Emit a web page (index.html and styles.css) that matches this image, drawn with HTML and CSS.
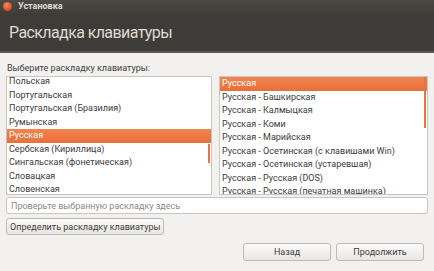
FILE: index.html
```html
<!DOCTYPE html>
<html lang="ru">
<head>
  <meta charset="UTF-8">
  <title>Установка</title>
  <link rel="stylesheet" href="styles.css">
</head>
<body>
  <div class="window">
    <div class="titlebar">
      <span class="close"></span>
      <span class="wintitle">Установка</span>
    </div>
    <div class="header">
      <h1>Раскладка клавиатуры</h1>
    </div>

    <div class="content">
      <div class="label">Выберите раскладку клавиатуры:</div>

      <div class="lists">
        <div class="list list-left">
          <div class="rows rows-left">
            <div class="row">Польская</div>
            <div class="row">Португальская</div>
            <div class="row">Португальская (Бразилия)</div>
            <div class="row">Румынская</div>
            <div class="row selected">Русская</div>
            <div class="row">Сербская (Кириллица)</div>
            <div class="row">Сингальская (фонетическая)</div>
            <div class="row">Словацкая</div>
            <div class="row">Словенская</div>
          </div>
          <span class="scroll scroll-left"></span>
        </div>

        <div class="list">
          <div class="rows">
            <div class="row selected">Русская</div>
            <div class="row">Русская - Башкирская</div>
            <div class="row">Русская - Калмыцкая</div>
            <div class="row">Русская - Коми</div>
            <div class="row">Русская - Марийская</div>
            <div class="row">Русская - Осетинская (с клавишами Win)</div>
            <div class="row">Русская - Осетинская (устаревшая)</div>
            <div class="row">Русская - Русская (DOS)</div>
            <div class="row">Русская - Русская (печатная машинка)</div>
          </div>
          <span class="scroll scroll-right"></span>
        </div>
      </div>

      <input class="entry" type="text" placeholder="Проверьте выбранную раскладку здесь">

      <button class="btn detect">Определить раскладку клавиатуры</button>

      <div class="actions">
        <button class="btn action">Назад</button>
        <button class="btn action">Продолжить</button>
      </div>
    </div>
  </div>
</body>
</html>
```

FILE: styles.css
```css
body {
  margin: 0;
  font-family: Roboto, "Open Sans", sans-serif;
  font-size: 9px;
  background: #f2f1f0;
  color: #3c3c3c;
}

.window {
  width: 434px;
  height: 271px;
  overflow: hidden;
}

.titlebar {
  height: 14px;
  display: flex;
  align-items: center;
  gap: 6px;
  padding-left: 3px;
  background: linear-gradient(#4b4a45, #3e3d39);
}

.close {
  width: 9px;
  height: 9px;
  border-radius: 50%;
  background: radial-gradient(circle at 40% 35%, #f58a5e, #dd4814 70%);
  margin-top: -2px;
}

.wintitle {
  font-size: 9px;
  font-weight: bold;
  color: #dfdbd2;
  margin-top: -3px;
}

.header {
  height: 39px;
  background: #3d3c38;
  border-bottom: 2px solid #5a5954;
  box-sizing: border-box;
  display: flex;
  align-items: center;
  padding-left: 9px;
}

h1 {
  margin: 0;
  font-size: 16px;
  font-weight: normal;
  letter-spacing: -0.6px;
  color: #dfdbd2;
  margin-top: -1px;
}

.content {
  padding: 7px 6px 0 6px;
}

.label {
  height: 15px;
  line-height: 15px;
  padding-left: 1px;
  margin-top: 1px;
}

.lists {
  display: flex;
  gap: 7px;
}

.list {
  position: relative;
  flex: 1;
  height: 117px;
  background: #fff;
  border: 1px solid #c9c6c1;
  overflow: hidden;
}

.list-left {
  flex: none;
  width: 204px;
}

.rows-left {
  margin-top: -2px;
}

.row {
  height: 13.5px;
  line-height: 13.5px;
  padding-left: 2px;
  white-space: nowrap;
}

.row.selected {
  background: linear-gradient(#f3844f, #e86f3a);
  color: #fff;
}

.scroll {
  position: absolute;
  right: 1px;
  width: 2px;
  background: #e9743f;
}

.scroll-left {
  top: 67px;
  height: 19px;
}

.scroll-right {
  top: 0;
  height: 51px;
}

.entry {
  display: block;
  box-sizing: border-box;
  width: 100%;
  height: 17px;
  margin-top: 2px;
  border: 1px solid #c9c6c1;
  border-radius: 3px;
  background: #fff;
  font-family: inherit;
  font-size: 9px;
  padding: 0 4px;
}

.entry::placeholder {
  color: #8a8a8a;
}

.btn {
  font-family: inherit;
  font-size: 9px;
  color: #3c3c3c;
  background: linear-gradient(#fbfbfa, #e8e6e3);
  border: 1px solid #bdb9b3;
  border-radius: 3px;
  height: 17px;
  padding: 0 3px;
}

.detect {
  display: block;
  margin-top: 4px;
}

.actions {
  display: flex;
  justify-content: flex-end;
  gap: 5px;
  margin-top: 8px;
  padding-right: 4px;
}

.action {
  width: 88px;
  height: 18px;
}
```
